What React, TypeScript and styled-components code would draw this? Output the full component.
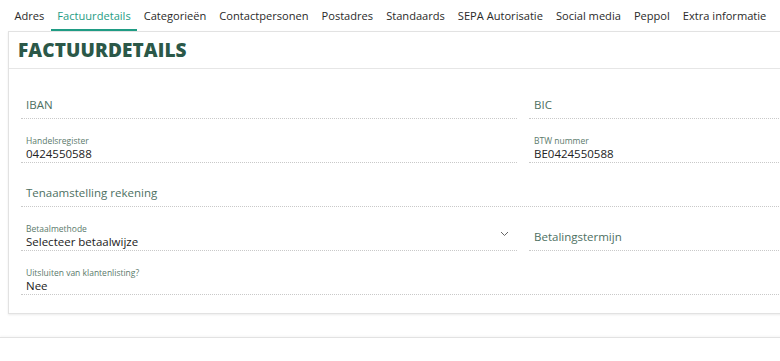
import React from "react";
import styled, { createGlobalStyle } from "styled-components";

const Global = createGlobalStyle`
  html, body { margin: 0; padding: 0; background: #fff; overflow: hidden; }
  body { font-family: "Open Sans", "Liberation Sans", sans-serif; color: #222; }
  * { box-sizing: border-box; }
`;

const Page = styled.div`
  width: 1060px;
  padding: 0 0 0 8px;
`;

const Tabs = styled.nav`
  display: flex;
  height: 31px;
`;

const Tab = styled.div<{ $active?: boolean }>`
  display: flex;
  align-items: center;
  padding: 1px 6.5px 0;
  height: 31px;
  font-size: 11.1px;
  color: ${(p) => (p.$active ? "#1f9c84" : "#2a2a2a")};
  border-bottom: 2px solid ${(p) => (p.$active ? "#1f9c84" : "transparent")};
  white-space: nowrap;
`;

const Card = styled.section`
  width: 1032px;
  border: 1px solid #e2e2e2;
  box-shadow: 0 1px 2px rgba(0, 0, 0, 0.08);
  background: #fff;
`;

const CardHeader = styled.header`
  height: 37px;
  display: flex;
  align-items: center;
  padding-left: 9px;
  border-bottom: 1px solid #e6e6e6;
`;

const Title = styled.h2`
  margin: 0;
  font-size: 19px;
  font-weight: 800;
  letter-spacing: 0.1px;
  color: #2b5848;
`;

const FormGrid = styled.div`
  display: grid;
  grid-template-columns: 496px 496px;
  column-gap: 12px;
  padding: 6px 12px 18px 12px;
`;

const Field = styled.div<{ $full?: boolean }>`
  grid-column: ${(p) => (p.$full ? "1 / -1" : "auto")};
  height: 44px;
  position: relative;
  display: flex;
  flex-direction: column;
  justify-content: flex-end;
  padding: 0 5px;
  border-bottom: 1px dotted #c9c9c9;
`;

const SmallLabel = styled.div`
  font-size: 8.5px;
  line-height: 11px;
  color: #5b7a6c;
`;

const Value = styled.div`
  font-size: 11.5px;
  line-height: 16px;
  color: #222;
`;

const Placeholder = styled.div`
  font-size: 11.5px;
  line-height: 16px;
  color: #4d7062;
  padding-bottom: 5px;
`;

const Chevron = styled.svg`
  position: absolute;
  right: 8px;
  bottom: 13px;
  width: 9px;
  height: 6px;
`;

const Footer = styled.div`
  margin-top: 23px;
  margin-left: -8px;
  height: 30px;
  border-top: 1px solid #e2e2e2;
  box-shadow: 0 -1px 2px rgba(0, 0, 0, 0.04);
`;

const tabs = [
  "Adres",
  "Factuurdetails",
  "Categorieën",
  "Contactpersonen",
  "Postadres",
  "Standaards",
  "SEPA Autorisatie",
  "Social media",
  "Peppol",
  "Extra informatie",
];

export default function App() {
  return (
    <>
      <Global />
      <Page>
        <Tabs>
          {tabs.map((t) => (
            <Tab key={t} $active={t === "Factuurdetails"}>
              {t}
            </Tab>
          ))}
        </Tabs>
        <Card>
          <CardHeader>
            <Title>FACTUURDETAILS</Title>
          </CardHeader>
          <FormGrid>
            <Field>
              <Placeholder>IBAN</Placeholder>
            </Field>
            <Field>
              <Placeholder>BIC</Placeholder>
            </Field>
            <Field>
              <SmallLabel>Handelsregister</SmallLabel>
              <Value>0424550588</Value>
            </Field>
            <Field>
              <SmallLabel>BTW nummer</SmallLabel>
              <Value>BE0424550588</Value>
            </Field>
            <Field $full>
              <Placeholder>Tenaamstelling rekening</Placeholder>
            </Field>
            <Field>
              <SmallLabel>Betaalmethode</SmallLabel>
              <Value>Selecteer betaalwijze</Value>
              <Chevron viewBox="0 0 9 6">
                <path d="M1 1l3.5 3.5L8 1" fill="none" stroke="#666" strokeWidth="1" />
              </Chevron>
            </Field>
            <Field>
              <Placeholder>Betalingstermijn</Placeholder>
            </Field>
            <Field $full>
              <SmallLabel>Uitsluiten van klantenlisting?</SmallLabel>
              <Value>Nee</Value>
            </Field>
          </FormGrid>
        </Card>
        <Footer />
      </Page>
    </>
  );
}
